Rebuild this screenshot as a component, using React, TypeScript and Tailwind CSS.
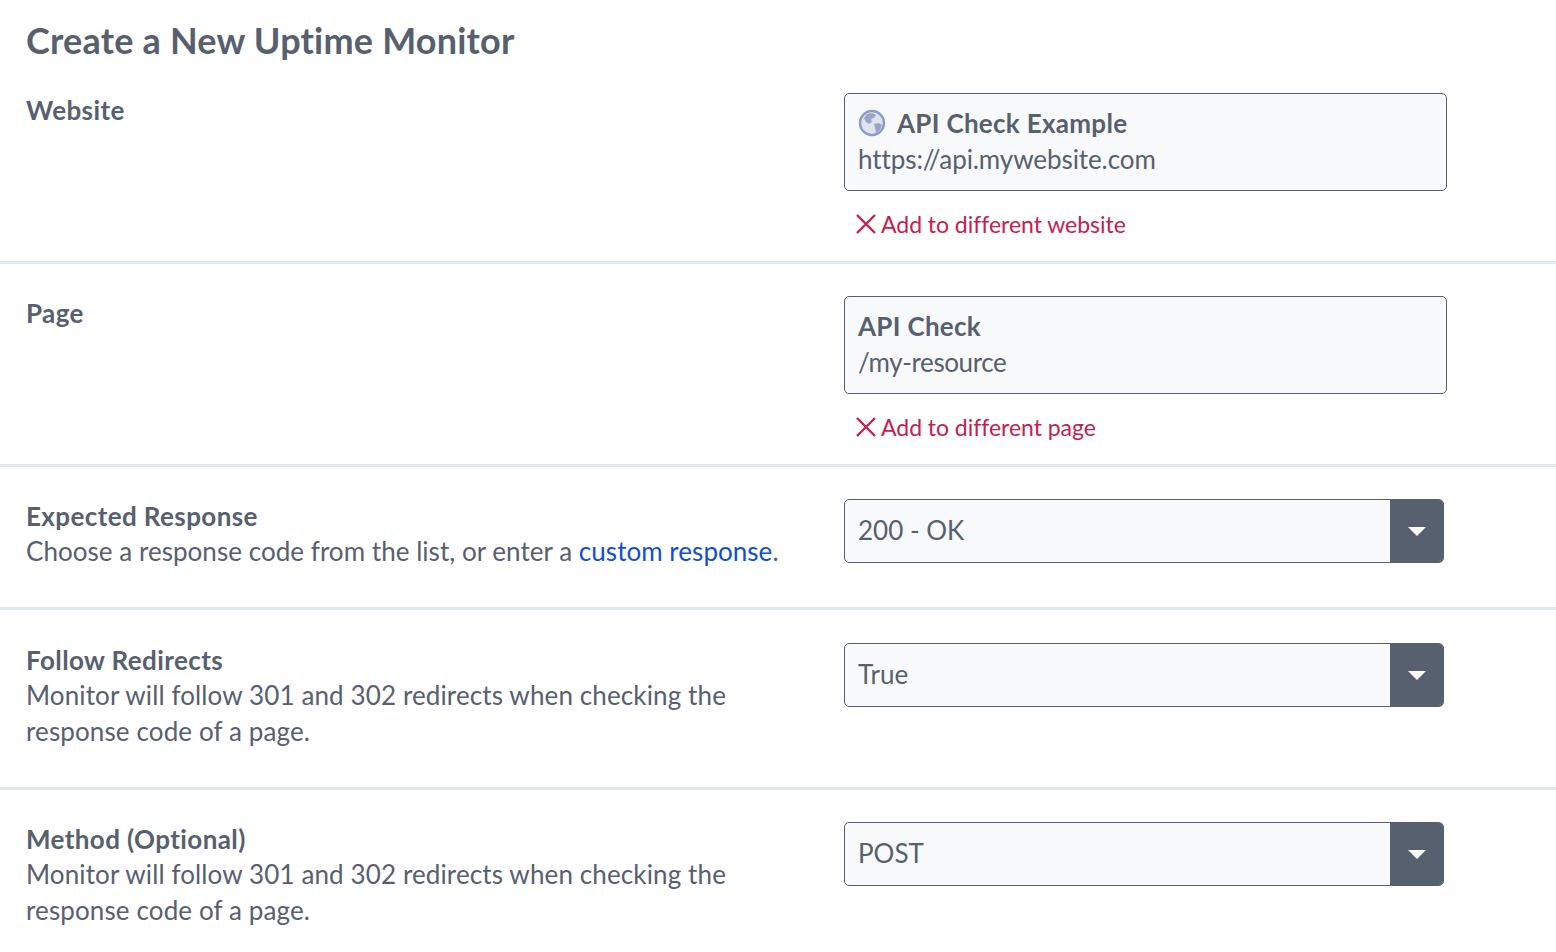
import { ReactNode } from "react";

const Globe = () => (
  <svg width="28" height="28" viewBox="0 0 28 28" className="shrink-0">
    <circle cx="14" cy="14" r="12" fill="#dfe3ee" stroke="#8f9bc9" strokeWidth="2.5" />
    <path d="M9 5c3-1 7-1 9 1l-2 3-3 1 1 3-3 2-3-2-2-4z" fill="#9aa6c8" />
    <path d="M16 15l5-1 3 2-2 5-4 3-1-5z" fill="#9aa6c8" />
  </svg>
);

const CrossIcon = () => (
  <svg width="22" height="22" viewBox="0 0 22 22" className="shrink-0" fill="none" stroke="#c4214f" strokeWidth="2.4">
    <path d="M2 2l18 18M20 2L2 20" />
  </svg>
);

const Section = ({ label, desc, children, className }: { label: string; desc?: ReactNode; children: ReactNode; className: string }) => (
  <section className={`flex pl-[26px] border-b-[3px] border-[#e1e9f0] ${className}`}>
    <div className="w-[818px] shrink-0 -mt-px">
      <h3 className="font-bold tracking-[0.4px]">{label}</h3>
      {desc && <p className="w-[780px] -mt-px">{desc}</p>}
    </div>
    <div className="flex-1">{children}</div>
  </section>
);

const SelectedBox = ({ title, sub, subClass, link, icon }: { title: string; sub: string; subClass: string; link: string; icon?: boolean }) => (
  <div>
    <div className="w-[603px] h-[98px] px-[13px] pt-[11px] border border-[#57606f] rounded-[5px] bg-[#f8f9fb]">
      <div className="flex items-center gap-[11px] font-bold tracking-[0.3px]">
        {icon && <Globe />}
        {title}
      </div>
      <div className={subClass}>{sub}</div>
    </div>
    <a className="flex items-center gap-[4px] mt-[15px] pl-[11px] text-[#c4214f] text-[23px] tracking-[-0.03px]">
      <CrossIcon />
      {link}
    </a>
  </div>
);

const SelectBox = ({ value }: { value: string }) => (
  <div className="flex w-[600px] h-[64px] border border-[#57606f] rounded-[5px] bg-[#f8f9fb] overflow-hidden">
    <div className="flex-1 flex items-center px-[13px] -mt-[2px]">{value}</div>
    <div className="w-[53px] bg-[#57606f] flex items-center justify-center">
      <div className="w-0 h-0 border-x-[9px] border-x-transparent border-t-[9px] border-t-white" />
    </div>
  </div>
);

const redirectsText = (
  <span className="tracking-[0.12px]">
    Monitor will follow 301 and 302 redirects when checking the
    <br />
    response code of a page.
  </span>
);

export default function App() {
  return (
    <div className="w-[1556px] h-[952px] overflow-hidden bg-white text-[#57606f] text-[26px] leading-[36px] font-['Lato','Noto_Sans',sans-serif]">
      <h1 className="pl-[26px] pt-[18px] pb-[17px] text-[36px] leading-[44px] font-bold tracking-[0.2px]">Create a New Uptime Monitor</h1>
      <Section label="Website" className="pt-[14px] pb-[19px]">
        <SelectedBox title="API Check Example" sub="https://api.mywebsite.com" subClass="tracking-[-0.08px]" link="Add to different website" icon />
      </Section>
      <Section label="Page" className="pt-[32px] pb-[19px]">
        <SelectedBox title="API Check" sub="/my-resource" subClass="tracking-[-0.4px]" link="Add to different page" />
      </Section>
      <Section
        label="Expected Response"
        desc={<span className="tracking-[0.04px]">Choose a response code from the list, or enter a <a className="text-[#0f4fd6]">custom response</a>.</span>}
        className="pt-[32px] pb-[38px]"
      >
        <SelectBox value="200 - OK" />
      </Section>
      <Section label="Follow Redirects" desc={redirectsText} className="pt-[33px] pb-[38px]">
        <SelectBox value="True" />
      </Section>
      <section className="flex pl-[26px] pt-[32px]">
        <div className="w-[818px] shrink-0 -mt-px">
          <h3 className="font-bold tracking-[0.4px]">Method (Optional)</h3>
          <p className="w-[780px] -mt-px">{redirectsText}</p>
        </div>
        <SelectBox value="POST" />
      </section>
    </div>
  );
}
